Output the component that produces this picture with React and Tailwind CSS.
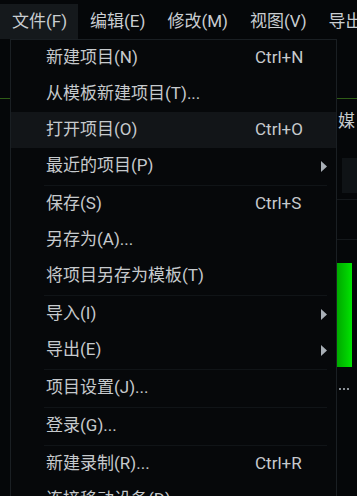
import React from "react";

const font = { fontFamily: "Roboto, 'Noto Sans CJK SC', sans-serif" };

const items = [
  { label: "新建项目(N)", key: "Ctrl+N" },
  { label: "从模板新建项目(T)..." },
  { label: "打开项目(O)", key: "Ctrl+O", active: true },
  { label: "最近的项目(P)", sub: true },
  { sep: true },
  { label: "保存(S)", key: "Ctrl+S" },
  { label: "另存为(A)..." },
  { label: "将项目另存为模板(T)" },
  { sep: true },
  { label: "导入(I)", sub: true },
  { label: "导出(E)", sub: true },
  { sep: true },
  { label: "项目设置(J)..." },
  { sep: true },
  { label: "登录(G)..." },
  { sep: true },
  { label: "新建录制(R)...", key: "Ctrl+R" },
  { label: "连接移动设备(D)..." },
];

function Arrow() {
  return (
    <svg width="6" height="11" viewBox="0 0 6 11" className="fill-[#a8afb6]">
      <polygon points="0,0 6,5.5 0,11" />
    </svg>
  );
}

function MenuItem({ item }) {
  if (item.sep) {
    return (
      <div className="h-[2px] flex items-center pl-[33px] pr-[9px]">
        <div className="h-px w-full bg-[#101417]" />
      </div>
    );
  }
  return (
    <div
      className={`h-[36px] flex items-center pl-[35px] pr-[9px] text-[17px] text-[#c6cacd] ${
        item.active ? "bg-[#121518]" : ""
      }`}
    >
      <span className="w-[209px] whitespace-nowrap">{item.label}</span>
      <span className="flex-1 whitespace-nowrap">{item.key}</span>
      {item.sub && <Arrow />}
    </div>
  );
}

export default function App() {
  return (
    <div className="relative w-[357px] h-[496px] overflow-hidden bg-[#050709]" style={font}>
      {/* menu bar */}
      <div className="h-[39px] flex items-end text-[17px] text-[#c9cdd1]">
        <div className="h-[35px] w-[78px] shrink-0 bg-[#15191c] flex items-center pl-[12px] whitespace-nowrap">文件(F)</div>
        <div className="h-[35px] flex items-center pl-[12px] gap-[22px] whitespace-nowrap">
          <span>编辑(E)</span>
          <span>修改(M)</span>
          <span>视图(V)</span>
          <span>导出</span>
        </div>
      </div>

      {/* app content behind the menu */}
      <div className="h-[457px]">
        <div className="mt-[59px] h-px bg-[#2f5c17]" />
        <div className="ml-[338px] mt-[5px] h-[36px] flex items-center text-[17px] text-[#c6cacd] whitespace-nowrap">
          媒
        </div>
        <div className="ml-[342px] mt-[18px] h-[35px] bg-[#0f1316]" />
        <div className="ml-[337px] mt-[6px] h-px bg-[#14181b]" />
        <div className="ml-[337px] mt-[39px] h-px bg-[#14181b]" />
        <div className="ml-[337px] mt-[23px] w-[15px] h-[104px] bg-gradient-to-r from-[#00a800] to-[#00e400]" />
        <div className="ml-[339px] mt-[21px] flex gap-[2px]">
          <span className="w-[2px] h-[2px] bg-[#8a9096]" />
          <span className="w-[2px] h-[2px] bg-[#8a9096]" />
          <span className="w-[2px] h-[2px] bg-[#8a9096]" />
        </div>
      </div>

      {/* dropdown */}
      <div className="absolute left-[10px] top-[39px] w-[327px] h-[470px] border border-[#1a1f23] bg-[#06080a]">
        {items.map((item, i) => (
          <MenuItem key={i} item={item} />
        ))}
      </div>
    </div>
  );
}
